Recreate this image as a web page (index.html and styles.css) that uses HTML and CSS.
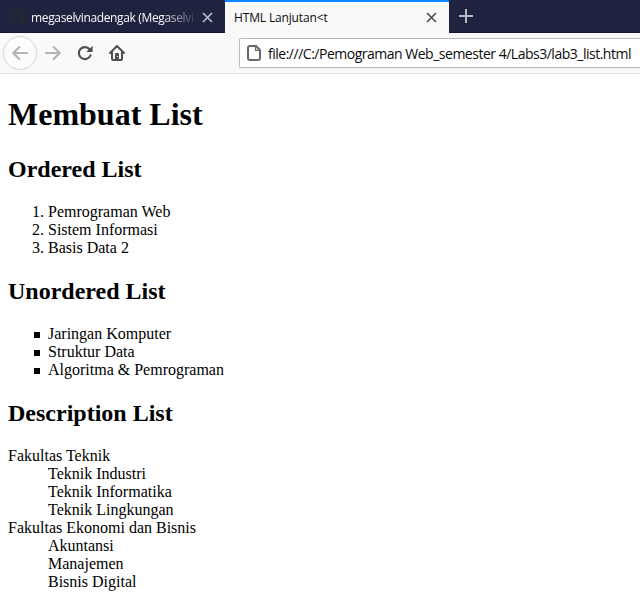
FILE: index.html
```html
<!DOCTYPE html>
<html lang="id">
<head>
<meta charset="utf-8">
<title>HTML Lanjutan&lt;t</title>
<link rel="stylesheet" href="styles.css">
</head>
<body>
<div class="tabs">
  <div class="tab">
    <svg class="favicon" width="16" height="16" viewBox="0 0 16 16"><path fill="#24292e" d="M8 0C3.58 0 0 3.58 0 8c0 3.54 2.29 6.53 5.47 7.59.4.07.55-.17.55-.38v-1.49c-2.23.48-2.7-.94-2.7-.94-.36-.92-.89-1.17-.89-1.17-.73-.5.05-.49.05-.49.81.06 1.23.83 1.23.83.72 1.23 1.88.87 2.34.67.07-.52.28-.87.51-1.07-1.78-.2-3.64-.89-3.64-3.95 0-.87.31-1.59.82-2.15-.08-.2-.36-1.02.08-2.12 0 0 .67-.21 2.2.82a7.6 7.6 0 0 1 4 0c1.53-1.04 2.2-.82 2.2-.82.44 1.1.16 1.92.08 2.12.51.56.82 1.27.82 2.15 0 3.07-1.87 3.75-3.65 3.95.29.25.54.73.54 1.48v2.2c0 .21.15.46.55.38A8 8 0 0 0 16 8c0-4.42-3.58-8-8-8z"/></svg>
    <span class="title title-faded">megaselvinadengak (Megaselvi</span>
    <svg class="close" width="11" height="11" viewBox="0 0 11 11"><path d="M1 1l9 9M10 1l-9 9"/></svg>
  </div>
  <div class="tab tab-active">
    <span class="title">HTML Lanjutan&lt;t</span>
    <svg class="close" width="11" height="11" viewBox="0 0 11 11"><path d="M1 1l9 9M10 1l-9 9"/></svg>
  </div>
  <svg class="plus" width="14" height="14" viewBox="0 0 14 14"><path d="M7 0v14M0 7h14"/></svg>
</div>
<div class="toolbar">
  <div class="back"><svg width="16" height="16" viewBox="0 0 16 16"><path d="M15.2 8H1.3M7.3 2l-6 6 6 6"/></svg></div>
  <svg class="forward" width="16" height="16" viewBox="0 0 16 16"><path d="M.8 8h13.9M8.7 2l6 6-6 6"/></svg>
  <svg class="reload" width="16" height="16" viewBox="0 0 16 16"><path fill="none" stroke="#505054" stroke-width="2.1" stroke-linecap="round" d="M12.7 4.5A6 6 0 1 0 13.5 10.3"/><path fill="#505054" d="M15.6.8v5.6q0 .6-.6.6H9.3z"/></svg>
  <svg class="home" width="16" height="16" viewBox="0 0 16 16"><path fill="none" stroke="#505054" stroke-width="2" stroke-linecap="round" stroke-linejoin="round" d="M1 8l7-7 7 7M3 7v7q0 1 1 1h8q1 0 1-1V7"/><path fill="#505054" fill-rule="evenodd" d="M6 15V9q0-1 1-1h2q1 0 1 1v6zM8 11h1v1H8z"/></svg>
  <div class="address">
    <svg width="14" height="16" viewBox="0 0 14 16"><path fill="none" stroke="#68686c" stroke-width="2" stroke-linejoin="round" d="M3 1h6l4 4v8q0 2-2 2H3q-2 0-2-2V3q0-2 2-2z"/><path fill="none" stroke="#68686c" stroke-width="1.3" d="M8.6 1v4.4H13"/></svg>
    <span class="url">file:///C:/Pemograman Web_semester 4/Labs3/lab3_list.html</span>
  </div>
</div>
<main>
  <h1>Membuat List</h1>
  <h2>Ordered List</h2>
  <ol>
    <li>Pemrograman Web</li>
    <li>Sistem Informasi</li>
    <li>Basis Data 2</li>
  </ol>
  <h2>Unordered List</h2>
  <ul>
    <li>Jaringan Komputer</li>
    <li>Struktur Data</li>
    <li>Algoritma &amp; Pemrograman</li>
  </ul>
  <h2>Description List</h2>
  <dl>
    <dt>Fakultas Teknik</dt>
    <dd>Teknik Industri</dd>
    <dd>Teknik Informatika</dd>
    <dd>Teknik Lingkungan</dd>
    <dt>Fakultas Ekonomi dan Bisnis</dt>
    <dd>Akuntansi</dd>
    <dd>Manajemen</dd>
    <dd>Bisnis Digital</dd>
  </dl>
</main>
</body>
</html>
```
FILE: styles.css
```css
* { box-sizing: border-box; }
html { overflow: hidden; }
body {
  margin: 0;
  height: 595px;
  overflow: hidden;
  background: #fff;
  color: #000;
  font: 16px/18px "Liberation Serif", serif;
}
svg { display: block; flex: none; }
.tabs {
  display: flex;
  height: 33px;
  background: #20233f;
  box-shadow: inset 0 -1px #15172e;
  font: 12px/16px "Open Sans", sans-serif;
}
.tab {
  display: flex;
  align-items: center;
  width: 225px;
  padding: 1px 12px 0 9px;
  color: #f9f9fa;
}
.tab-active {
  width: 224px;
  border-top: 2px solid #0a84ff;
  padding-top: 0;
  background: #f9f9fa;
  color: #0c0c0d;
}
.title {
  flex: 1;
  padding-top: 1px;
  white-space: nowrap;
  letter-spacing: -0.15px;
}
.title-faded {
  margin: 0 7px 0 6px;
  letter-spacing: -0.35px;
  -webkit-mask-image: linear-gradient(to right, #000 132px, transparent 168px);
  mask-image: linear-gradient(to right, #000 132px, transparent 168px);
}
.close { fill: none; stroke: #bebec8; stroke-width: 1.6; }
.tab-active .close { stroke: #4c4c50; }
.plus { margin: 9px 0 0 10px; fill: none; stroke: #b9b8c9; stroke-width: 2; }
.toolbar {
  display: flex;
  align-items: center;
  height: 41px;
  padding-left: 3px;
  background: #f9f9fa;
  border-bottom: 1px solid #e0e0e1;
}
.back {
  display: flex;
  align-items: center;
  justify-content: center;
  width: 34px;
  height: 34px;
  border: 1px solid #d5d5d6;
  border-radius: 50%;
  background: #fcfcfc;
}
.back svg, .forward {
  fill: none;
  stroke: #b3b3b4;
  stroke-width: 2;
  stroke-linecap: round;
  stroke-linejoin: round;
}
.forward { margin-left: 8px; }
.reload { margin-left: 16px; }
.home { margin-left: 16px; }
.address {
  display: flex;
  align-items: center;
  flex: 1;
  height: 30px;
  margin-left: 114px;
  padding-left: 7px;
  border: 1px solid #bcbcbd;
  border-right: 0;
  border-radius: 2px 0 0 2px;
  background: #fff;
  box-shadow: 0 1px 3px rgba(0, 0, 0, 0.05);
}
.url {
  margin-left: 7px;
  padding-top: 2px;
  color: #0c0c0d;
  font: 14px/20px "Open Sans", sans-serif;
  white-space: nowrap;
  letter-spacing: -0.49px;
}
main { padding: 22px 8px 0; }
h1 { margin: 0 0 22px; font-size: 32px; line-height: 37px; }
h2 { margin: 20px 0; font-size: 24px; line-height: 28px; }
ol, ul { margin: 0; padding-left: 40px; }
ul { list-style: none; }
ul li { display: flex; align-items: center; }
ul li::before {
  content: "";
  width: 6px;
  height: 6px;
  margin: 2px 8px 0 -14px;
  background: #000;
}
dl { margin: 0; }
dd { margin: 0 0 0 40px; }
```
